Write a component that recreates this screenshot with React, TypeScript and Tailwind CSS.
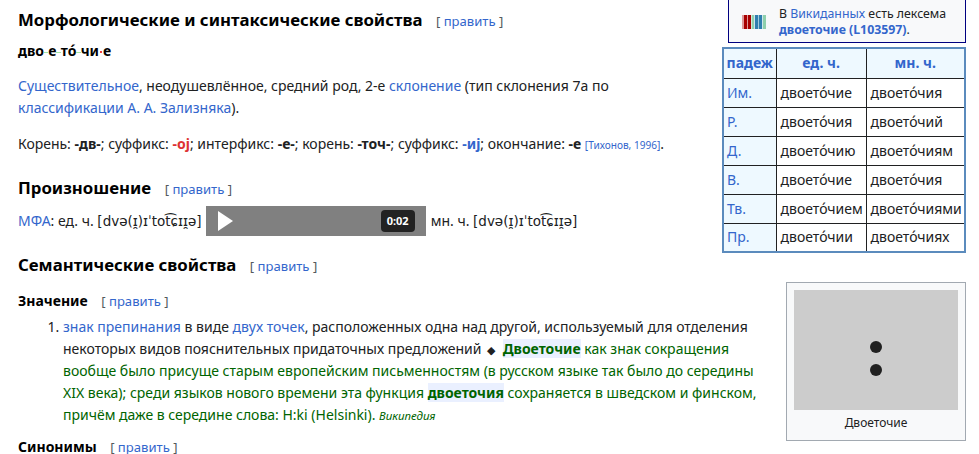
const pageFont = "font-['Noto_Sans',sans-serif]";

function Edit() {
  return (
    <span className="ml-[13.5px] text-[13.1px] font-normal text-[#54595d]">
      [ <a className="text-[#3366cc]">править</a> ]
    </span>
  );
}

function A({ children }: { children: React.ReactNode }) {
  return <a className="text-[#3366cc]">{children}</a>;
}

function Ipa() {
  return <span className="font-['DejaVu_Sans',sans-serif] text-[13.5px]">[dvə(ɪ̯)ɪˈtot͡ɕɪɪ̯ə]</span>;
}

function Hy() {
  return <span className="inline-block h-px w-[4.3px] bg-[#a5e6a5] align-middle" />;
}

const cases = [
  ["Им.", "двоето́чие", "двоето́чия"],
  ["Р.", "двоето́чия", "двоето́чий"],
  ["Д.", "двоето́чию", "двоето́чиям"],
  ["В.", "двоето́чие", "двоето́чия"],
  ["Тв.", "двоето́чием", "двоето́чиями"],
  ["Пр.", "двоето́чии", "двоето́чиях"],
];

function Barcode() {
  const bars: [number, number, string][] = [
    [0, 2, "#dd9999"],
    [2, 3, "#a80000"],
    [5, 1, "#dd9999"],
    [6, 3, "#a80000"],
    [9, 1, "#d0e8d8"],
    [10, 2, "#8fd0ac"],
    [12, 1, "#cfe3ec"],
    [13, 3, "#2f7fae"],
    [16, 1, "#9fc8dc"],
    [17, 3, "#2f7fae"],
    [20, 1, "#cfe6ea"],
    [21, 3, "#8fd0ac"],
  ];
  return (
    <svg width="24" height="14" viewBox="0 0 24 14" className="ml-[13px] shrink-0">
      {bars.map(([x, w, c]) => (
        <rect key={x} x={x} y="0" width={w} height="14" fill={c} />
      ))}
    </svg>
  );
}

function NounTable() {
  return (
    <table className="mt-[4px] w-[244px] border-collapse border-2 border-[#5b8bbd] text-[14px] leading-[20px]">
      <thead>
        <tr className="h-[30px] bg-[#eef9ff] font-bold text-[#3366cc]">
          <th className="w-[53px] border border-[#202122] p-0 text-center">падеж</th>
          <th className="w-[90px] border border-[#202122] p-0 text-center">ед. ч.</th>
          <th className="border border-[#202122] p-0 text-center">мн. ч.</th>
        </tr>
      </thead>
      <tbody>
        {cases.map(([name, one, many]) => (
          <tr key={name} className="h-[29px]">
            <td className="border border-[#202122] bg-[#eef9ff] pl-[3px] text-[#3366cc]">{name}</td>
            <td className="border border-[#202122] pl-[4px] whitespace-nowrap">{one}</td>
            <td className="border border-[#202122] pl-[4px] whitespace-nowrap">{many}</td>
          </tr>
        ))}
      </tbody>
    </table>
  );
}

export default function App() {
  return (
    <div className={`${pageFont} h-[454px] w-[979px] overflow-hidden bg-white pl-[18px] text-[14px] leading-[22px] text-[#202122]`}>
      <div className="flex">
        <div className="w-[704px] shrink-0">
          <h2 className="mt-[8px] text-[16.8px] leading-[24px] font-bold text-black">
            Морфологические и синтаксические свойства
            <Edit />
          </h2>
          <p className="mt-[7px] font-bold text-black">
            дво
            <Hy />е
            <Hy />
            то́
            <Hy />
            чи
            <span className="mx-px inline-block h-[2px] w-[2px] rounded-full bg-[#ee0000] align-middle" />е
          </p>
          <p className="mt-[13px] w-[690px]">
            <A>Существительное</A>, неодушевлённое, средний род, 2-е <A>склонение</A> (тип склонения 7а по{" "}
            <A>классификации А. А. Зализняка</A>).
          </p>
          <p className="mt-[14px]">
            Корень: <b>-дв-</b>; суффикс: <b className="text-[#dd3333]">-oj</b>; интерфикс: <b>-е-</b>; корень:{" "}
            <b>-точ-</b>; суффикс: <b className="text-[#3366cc]">-иj</b>; окончание: <b>-е</b>{" "}
            <a className="text-[10.1px] text-[#3366cc]">[Тихонов, 1996]</a>.
          </p>
          <h3 className="mt-[20px] text-[16.8px] leading-[24px] font-bold text-black">
            Произношение
            <Edit />
          </h3>
          <div className="mt-[5px] flex items-center whitespace-nowrap">
            <span>
              <A>МФА</A>: ед. ч. <Ipa />
            </span>
            <div className="mr-[5px] ml-[4px] flex h-[30px] w-[220px] items-center justify-between bg-[#808080] pr-[11px] pl-[12px]">
              <svg width="15" height="20" viewBox="0 0 15 20">
                <polygon points="0,0 15,10 0,20" fill="#ffffff" />
              </svg>
              <span className="flex h-[22px] w-[34px] items-center justify-center rounded-[4px] bg-[#222222] text-[11px] font-bold text-white">
                0:02
              </span>
            </div>
            <span>
              мн. ч. <Ipa />
            </span>
          </div>
        </div>
        <div className="flex w-[244px] flex-col items-end">
          <div className="-mt-[1px] flex h-[44px] w-[238px] items-center border border-[#000080] bg-[#f8f9fa] pt-[2px] text-[12.32px] leading-[16px]">
            <Barcode />
            <div className="ml-[13px]">
              В <A>Викиданных</A> есть лексема
              <br />
              <b className="text-[#3366cc]">двоеточие (L103597)</b>.
            </div>
          </div>
          <NounTable />
        </div>
      </div>

      <div className="flex">
        <div className="w-[746px] shrink-0">
          <h3 className="text-[16.8px] leading-[24px] font-bold text-black">
            Семантические свойства
            <Edit />
          </h3>
          <h4 className="mt-[12px] leading-[22px] font-bold text-black">
            Значение
            <Edit />
          </h4>
          <ol className="mt-[4px] ml-[45px] list-decimal">
            <li>
              <A>знак препинания</A> в виде <A>двух точек</A>, расположенных одна над другой, используемый для отделения
              некоторых видов пояснительных придаточных предложений{" "}
              <span className="mr-[4px] ml-[2px] text-[11px] leading-none">◆</span>{" "}
              <span className="text-[#006400]">
                <b className="bg-[#eaf0ff]">Двоеточие</b> как знак сокращения вообще было присуще старым европейским
                письменностям (в русском языке так было до середины XIX века); среди языков нового времени эта функция{" "}
                <b className="bg-[#eaf0ff]">двоеточия</b> сохраняется в шведском и финском, причём даже в середине слова:
                H:ki (Helsinki). <i className="text-[11.5px] leading-none">Википедия</i>
              </span>
            </li>
          </ol>
          <h4 className="mt-[13px] leading-[16px] font-bold text-black">
            Синонимы
            <Edit />
          </h4>
        </div>
        <div className="mt-[29px] ml-[22px] h-[159px] w-[180px] shrink-0 border border-[#a2a9b1] bg-[#f8f9fa] p-[7px] text-center text-[12px]">
          <div className="flex h-[120px] flex-col items-center justify-center gap-[11px] bg-[#cccccc] pt-[17px]">
            <span className="h-[12px] w-[12px] rounded-full bg-[#202020]" />
            <span className="h-[12px] w-[12px] rounded-full bg-[#202020]" />
          </div>
          <div className="mt-[2px] leading-[22px]">Двоеточие</div>
        </div>
      </div>
    </div>
  );
}
